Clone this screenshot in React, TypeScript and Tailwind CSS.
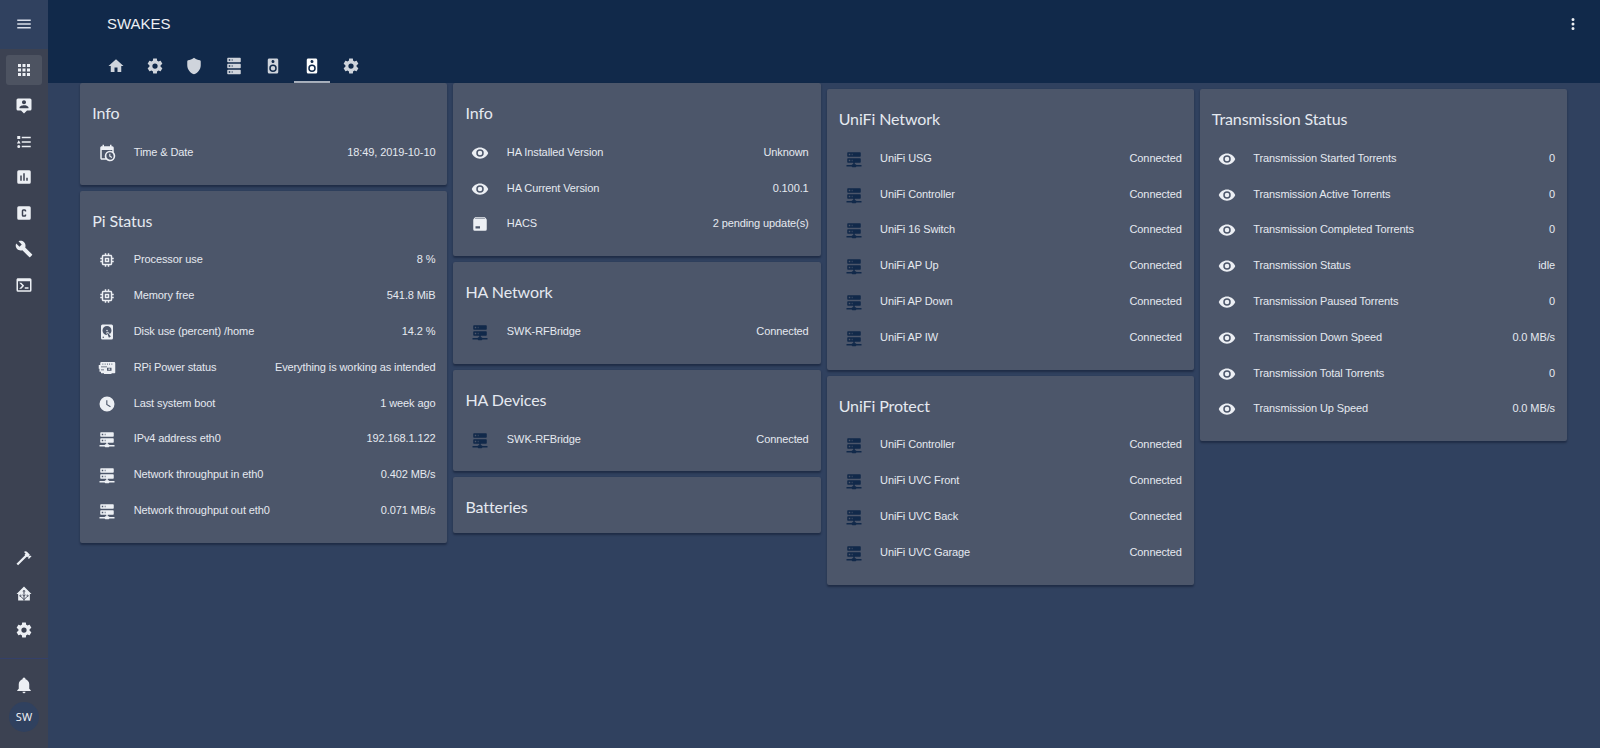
import React from "react";

const P = {
  menu: "M3,6H21V8H3V6M3,11H21V13H3V11M3,16H21V18H3V16Z",
  apps: "M16,20H20V16H16M16,14H20V10H16M10,8H14V4H10M16,8H20V4H16M10,14H14V10H10M4,14H8V10H4M4,20H8V16H4M10,20H14V16H10M4,8H8V4H4V8Z",
  home: "M10,20V14H14V20H19V12H22L12,3L2,12H5V20H10Z",
  cog: "M12,15.5A3.5,3.5 0 0,1 8.5,12A3.5,3.5 0 0,1 12,8.5A3.5,3.5 0 0,1 15.5,12A3.5,3.5 0 0,1 12,15.5M19.43,12.97C19.47,12.65 19.5,12.33 19.5,12C19.5,11.67 19.47,11.34 19.43,11L21.54,9.37C21.73,9.22 21.78,8.95 21.66,8.73L19.66,5.27C19.54,5.05 19.27,4.96 19.05,5.05L16.56,6.05C16.04,5.66 15.5,5.32 14.87,5.07L14.5,2.42C14.46,2.18 14.25,2 14,2H10C9.75,2 9.54,2.18 9.5,2.42L9.13,5.07C8.5,5.32 7.96,5.66 7.44,6.05L4.95,5.05C4.73,4.96 4.46,5.05 4.34,5.27L2.34,8.73C2.21,8.95 2.27,9.22 2.46,9.37L4.57,11C4.53,11.34 4.5,11.67 4.5,12C4.5,12.33 4.53,12.65 4.57,12.97L2.46,14.63C2.27,14.78 2.21,15.05 2.34,15.27L4.34,18.73C4.46,18.95 4.73,19.03 4.95,18.95L7.44,17.94C7.96,18.34 8.5,18.68 9.13,18.93L9.5,21.58C9.54,21.82 9.75,22 10,22H14C14.25,22 14.46,21.82 14.5,21.58L14.87,18.93C15.5,18.67 16.04,18.34 16.56,17.94L19.05,18.95C19.27,19.03 19.54,18.95 19.66,18.73L21.66,15.27C21.78,15.05 21.73,14.78 21.54,14.63L19.43,12.97Z",
  shield: "M12,1C9.5,3 6.5,4 4,4.3Q3,4.5 3,6V11C3,16.5 6.8,21.4 12,23C17.2,21.4 21,16.5 21,11V6Q21,4.5 20,4.3C17.5,4 14.5,3 12,1Z",
  server: "M4,1H20A1,1 0 0,1 21,2V6A1,1 0 0,1 20,7H4A1,1 0 0,1 3,6V2A1,1 0 0,1 4,1M4,9H20A1,1 0 0,1 21,10V14A1,1 0 0,1 20,15H4A1,1 0 0,1 3,14V10A1,1 0 0,1 4,9M4,17H20A1,1 0 0,1 21,18V22A1,1 0 0,1 20,23H4A1,1 0 0,1 3,22V18A1,1 0 0,1 4,17M9,5H10V3H9V5M9,13H10V11H9V13M9,21H10V19H9V21M5,3V5H7V3H5M5,11V13H7V11H5M5,19V21H7V19H5Z",
  speaker: "M12,12A3,3 0 0,0 9,15A3,3 0 0,0 12,18A3,3 0 0,0 15,15A3,3 0 0,0 12,12M12,20A5,5 0 0,1 7,15A5,5 0 0,1 12,10A5,5 0 0,1 17,15A5,5 0 0,1 12,20M12,4A2,2 0 0,1 14,6A2,2 0 0,1 12,8C10.89,8 10,7.1 10,6C10,4.89 10.89,4 12,4M17,2H7C5.89,2 5,2.89 5,4V20A2,2 0 0,0 7,22H17A2,2 0 0,0 19,20V4C19,2.89 18.1,2 17,2Z",
  net: "M13,19H14A1,1 0 0,1 15,20H22V22H15A1,1 0 0,1 14,23H10A1,1 0 0,1 9,22H2V20H9A1,1 0 0,1 10,19H11V17H4A1,1 0 0,1 3,16V12A1,1 0 0,1 4,11H20A1,1 0 0,1 21,12V16A1,1 0 0,1 20,17H13V19M4,3H20A1,1 0 0,1 21,4V8A1,1 0 0,1 20,9H4A1,1 0 0,1 3,8V4A1,1 0 0,1 4,3M9,7H10V5H9V7M9,15H10V13H9V15M5,5V7H7V5H5M5,13V15H7V13H5Z",
  eye: "M12,9A3,3 0 0,0 9,12A3,3 0 0,0 12,15A3,3 0 0,0 15,12A3,3 0 0,0 12,9M12,17A5,5 0 0,1 7,12A5,5 0 0,1 12,7A5,5 0 0,1 17,12A5,5 0 0,1 12,17M12,4.5C7,4.5 2.73,7.61 1,12C2.73,16.39 7,19.5 12,19.5C17,19.5 21.27,16.39 23,12C21.27,7.61 17,4.5 12,4.5Z",
  chip: "M15 9H9v6h6V9zm-2 4h-2v-2h2v2zm8-2V9h-2V7c0-1.1-.9-2-2-2h-2V3h-2v2h-2V3H9v2H7c-1.1 0-2 .9-2 2v2H3v2h2v2H3v2h2v2c0 1.1.9 2 2 2h2v2h2v-2h2v2h2v-2h2c1.1 0 2-.9 2-2v-2h2v-2h-2v-2h2zm-4 6H7V7h10v10z",
  clock: "M12,2A10,10 0 0,0 2,12A10,10 0 0,0 12,22A10,10 0 0,0 22,12A10,10 0 0,0 12,2M16.2,16.2L11,13V7H12.5V12.2L17,14.9L16.2,16.2Z",
  disk: "M6,2H18A2,2 0 0,1 20,4V20A2,2 0 0,1 18,22H6A2,2 0 0,1 4,20V4A2,2 0 0,1 6,2M12,4A6,6 0 0,0 6,10C6,13.31 8.69,16 12.1,16L11.22,13.77C10.95,13.29 11.11,12.68 11.59,12.4L12.45,11.9C12.93,11.63 13.54,11.79 13.82,12.27L15.74,14.69C17.12,13.59 18,11.9 18,10A6,6 0 0,0 12,4M12,9A1,1 0 0,1 13,10A1,1 0 0,1 12,11A1,1 0 0,1 11,10A1,1 0 0,1 12,9M7,18A1,1 0 0,0 6,19A1,1 0 0,0 7,20A1,1 0 0,0 8,19A1,1 0 0,0 7,18M12.09,13.27L14.58,19.58L17.17,18.08L12.95,12.77L12.09,13.27Z",
  person: "M20,2H4A2,2 0 0,0 2,4V16A2,2 0 0,0 4,18H8L12,22L16,18H20A2,2 0 0,0 22,16V4A2,2 0 0,0 20,2M12,4.3C13.5,4.3 14.7,5.5 14.7,7C14.7,8.5 13.5,9.7 12,9.7C10.5,9.7 9.3,8.5 9.3,7C9.3,5.5 10.5,4.3 12,4.3M18,15H6V14.1C6,12.1 10,11 12,11C14,11 18,12.1 18,14.1V15Z",
  list: "M5,9.5L7.5,14H2.5L5,9.5M3,4H7V8H3V4M5,20A2,2 0 0,0 7,18A2,2 0 0,0 5,16A2,2 0 0,0 3,18A2,2 0 0,0 5,20M9,5V7H21V5H9M9,19H21V17H9V19M9,13H21V11H9V13Z",
  poll: "M17,17H15V13H17M13,17H11V7H13M9,17H7V10H9M19,3H5A2,2 0 0,0 3,5V19A2,2 0 0,0 5,21H19A2,2 0 0,0 21,19V5A2,2 0 0,0 19,3Z",
  cbox: "M5,3H19A2,2 0 0,1 21,5V19A2,2 0 0,1 19,21H5A2,2 0 0,1 3,19V5A2,2 0 0,1 5,3M11,7A2,2 0 0,0 9,9V15A2,2 0 0,0 11,17H13A2,2 0 0,0 15,15V14H13V15H11V9H13V10H15V9A2,2 0 0,0 13,7H11Z",
  wrench: "M22.7,19L13.6,9.9C14.5,7.6 14,4.9 12.1,3C10.1,1 7.1,0.6 4.7,1.7L9,6L6,9L1.6,4.7C0.4,7.1 0.9,10.1 2.9,12.1C4.8,14 7.5,14.5 9.8,13.6L18.9,22.7C19.3,23.1 19.9,23.1 20.3,22.7L22.6,20.4C23.1,20 23.1,19.3 22.7,19Z",
  console: "M20,19V7H4V19H20M20,3A2,2 0 0,1 22,5V19A2,2 0 0,1 20,21H4A2,2 0 0,1 2,19V5C2,3.89 2.9,3 4,3H20M13,17V15H18V17H13M9.58,13L5.57,9H8.4L11.7,12.3C12.09,12.69 12.09,13.33 11.7,13.72L8.42,17H5.59L9.58,13Z",
  hammer: "M2,19.63L13.43,8.2L12.72,7.5L14.14,6.07L12,3.89C13.2,2.7 15.09,2.7 16.27,3.89L19.87,7.5L18.45,8.91H21.29L22,9.62L18.45,13.21L17.74,12.5V9.62L16.27,11.04L15.56,10.33L4.13,21.76L2,19.63Z",
  bell: "M21,19V20H3V19L5,17V11C5,7.9 7.03,5.17 10,4.29C10,4.19 10,4.1 10,4A2,2 0 0,1 12,2A2,2 0 0,1 14,4C14,4.1 14,4.19 14,4.29C16.97,5.17 19,7.9 19,11V17L21,19M14,21A2,2 0 0,1 12,23A2,2 0 0,1 10,21",
  cal: "M15,13H16.5V15.82L18.94,17.23L18.19,18.53L15,16.69V13M19,8H5V19H9.67C9.24,18.09 9,17.07 9,16A7,7 0 0,1 16,9C17.07,9 18.09,9.24 19,9.67V8M5,21C3.89,21 3,20.1 3,19V5C3,3.89 3.89,3 5,3H6V1H8V3H16V1H18V3H19A2,2 0 0,1 21,5V11.1C22.24,12.36 23,14.09 23,16A7,7 0 0,1 16,23C14.09,23 12.36,22.24 11.1,21H5M16,11.15A4.85,4.85 0 0,0 11.15,16C11.15,18.68 13.32,20.85 16,20.85A4.85,4.85 0 0,0 20.85,16C20.85,13.32 18.68,11.15 16,11.15Z",
  dots: "M12,16A2,2 0 0,1 14,18A2,2 0 0,1 12,20A2,2 0 0,1 10,18A2,2 0 0,1 12,16M12,10A2,2 0 0,1 14,12A2,2 0 0,1 12,14A2,2 0 0,1 10,12A2,2 0 0,1 12,10M12,4A2,2 0 0,1 14,6A2,2 0 0,1 12,8A2,2 0 0,1 10,6A2,2 0 0,1 12,4Z",
  box: "M5.12,5L5.6,4.4H18.3L18.87,5M20.54,5.23L19.15,3.55C18.88,3.21 18.47,3 18,3H6C5.53,3 5.12,3.21 4.84,3.55L3.46,5.23C3.17,5.57 3,6 3,6.5V19A2,2 0 0,0 5,21H19A2,2 0 0,0 21,19V6.5C21,6 20.83,5.57 20.54,5.23M6,18V15H12V18H6Z",
  board: "M4.5,4H21.5A1.5,1.5 0 0,1 23,5.5V18A1,1 0 0,1 22,19H18V20H8V19H4V17H2V13H1V8H3V5.5A1.5,1.5 0 0,1 4.5,4M6,6V7.5H7V6H6M9,6V7.5H10V6H9M12,6V7.5H13V6H12M15,6V7.5H16V6H15M18,6V7.5H19V6H18M4,10V11H12V10H4M12,11.5V15.5H18V11.5H12M13.8,12.8H16.2V14.2H13.8V12.8M4,14V15H8V14H4Z",
  hass: "M12,2L22,12H19.8V20.8H4.2V12H2L12,2Z",
};
type IconName = keyof typeof P;

const EVEN_ODD: IconName[] = ["box", "board"];

function Icon({ name, className = "" }: { name: IconName; className?: string }) {
  return (
    <svg viewBox="0 0 24 24" className={"size-[18px] shrink-0 " + className} fill="currentColor" fillRule={EVEN_ODD.includes(name) ? "evenodd" : "nonzero"}>
      <path d={P[name]} />
      {name === "hass" && (
        <g fill="none" stroke="#3c4252" strokeWidth="1.2">
          <path d="M12,9.5V21M12,19.5L7.8,15.3M12,19.5L16.2,15.3M12,15L9.8,12.8M12,15L14.2,12.8" />
          <circle cx="12" cy="8.3" r="1.1" />
          <circle cx="7.2" cy="14.4" r="0.9" />
          <circle cx="16.8" cy="14.4" r="0.9" />
        </g>
      )}
    </svg>
  );
}

type RowData = [IconName, string, string];

function Card({ title, rows, dark = false }: { title: string; rows: RowData[]; dark?: boolean }) {
  return (
    <section className="rounded-[2px] bg-[#4c566a] px-3 pt-[17px] pb-[13.5px] shadow-[0_1.5px_2px_rgba(10,20,40,0.45)]">
      <h2 className="h-[25.3px] font-[Lato,sans-serif] text-[16px] leading-[26px] text-[#e5e9f0]">{title}</h2>
      {rows.length > 0 && (
        <div className="pt-[8px] pb-[2px]">
          {rows.map(([icon, name, value], i) => (
            <div key={i} className="flex h-[35.82px] items-center pl-[6px]">
              <Icon name={icon} className={dark ? "mt-[3px] text-[#11294a]" : "mt-[3px] text-[#eceff4]"} />
              <span className="ml-[17.4px] flex-1 pt-px">{name}</span>
              <span className="pt-px">{value}</span>
            </div>
          ))}
        </div>
      )}
    </section>
  );
}

const unifi = (names: string[]): RowData[] => names.map((n) => ["net", n, "Connected"]);

const top: IconName[] = ["apps", "person", "list", "poll", "cbox", "wrench", "console"];
const bottom: IconName[] = ["hammer", "hass", "cog"];
const tabs: IconName[] = ["home", "cog", "shield", "server", "speaker", "speaker", "cog"];

export default function App() {
  return (
    <div className="flex h-[748px] w-[1600px] overflow-hidden bg-[#30415f] font-['Liberation_Sans',Arial,sans-serif] text-[11px] leading-4 tracking-[-0.1px] text-[#e5e9f0]">
      <aside className="flex w-[48px] shrink-0 flex-col bg-[#3c4252]">
        <div className="flex h-[49px] items-center justify-center bg-[#30415f] pb-[2px]">
          <Icon name="menu" className="text-[#d8dee9]" />
        </div>
        <nav className="flex flex-col items-center pt-[3px] text-[#eceff4]">
          {top.map((n, i) => (
            <div key={n} className="flex h-[35.82px] items-center">
              <div className={"flex h-[30px] w-[36px] items-center justify-center rounded-[3px] " + (i === 0 ? "bg-[#4d5361]" : "")}>
                <Icon name={n} />
              </div>
            </div>
          ))}
        </nav>
        <div className="mt-auto flex flex-col items-center pb-[10px] text-[#eceff4]">
          {bottom.map((n) => (
            <div key={n} className="flex h-[35.82px] items-center">
              <Icon name={n} />
            </div>
          ))}
        </div>
        <div className="flex h-[90px] flex-col items-center border-t border-[#34406a] pt-[17px] text-[#eceff4]">
          <Icon name="bell" />
          <div className="mt-[8px] flex size-[30px] items-center justify-center rounded-full bg-[#30415f] font-['Noto_Sans',sans-serif] tracking-normal">SW</div>
        </div>
      </aside>
      <div className="flex min-w-0 flex-1 flex-col">
        <header className="flex h-[83px] shrink-0 flex-col bg-[#11294a]">
          <div className="flex h-[48px] items-center justify-between pr-[18px] pl-[59px] text-[15px] tracking-normal text-[#eceff4]">
            <h1>SWAKES</h1>
            <Icon name="dots" />
          </div>
          <div className="flex h-[35px] pl-[50.3px] text-[#cfd4dc]">
            {tabs.map((n, i) => (
              <div key={i} className={"mr-[3.1px] flex w-[36px] items-center justify-center border-b-2 pt-[2px] " + (i === 5 ? "border-[#a9b1bd] text-white" : "border-transparent")}>
                <Icon name={n} />
              </div>
            ))}
          </div>
        </header>
        <main className="grid grid-cols-4 items-start gap-x-[6px] pr-[33px] pl-[32.3px]">
          <div className="flex flex-col gap-[6px]">
            <Card title="Info" rows={[["cal", "Time & Date", "18:49, 2019-10-10"]]} />
            <Card
              title="Pi Status"
              rows={[
                ["chip", "Processor use", "8 %"],
                ["chip", "Memory free", "541.8 MiB"],
                ["disk", "Disk use (percent) /home", "14.2 %"],
                ["board", "RPi Power status", "Everything is working as intended"],
                ["clock", "Last system boot", "1 week ago"],
                ["net", "IPv4 address eth0", "192.168.1.122"],
                ["net", "Network throughput in eth0", "0.402 MB/s"],
                ["net", "Network throughput out eth0", "0.071 MB/s"],
              ]}
            />
          </div>
          <div className="flex flex-col gap-[6px]">
            <Card
              title="Info"
              rows={[
                ["eye", "HA Installed Version", "Unknown"],
                ["eye", "HA Current Version", "0.100.1"],
                ["box", "HACS", "2 pending update(s)"],
              ]}
            />
            <Card title="HA Network" rows={unifi(["SWK-RFBridge"])} dark />
            <Card title="HA Devices" rows={unifi(["SWK-RFBridge"])} dark />
            <Card title="Batteries" rows={[]} />
          </div>
          <div className="flex flex-col gap-[6px] pt-[6px]">
            <Card title="UniFi Network" rows={unifi(["UniFi USG", "UniFi Controller", "UniFi 16 Switch", "UniFi AP Up", "UniFi AP Down", "UniFi AP IW"])} dark />
            <Card title="UniFi Protect" rows={unifi(["UniFi Controller", "UniFi UVC Front", "UniFi UVC Back", "UniFi UVC Garage"])} dark />
          </div>
          <div className="flex flex-col gap-[6px] pt-[6px]">
            <Card
              title="Transmission Status"
              rows={[
                ["eye", "Transmission Started Torrents", "0"],
                ["eye", "Transmission Active Torrents", "0"],
                ["eye", "Transmission Completed Torrents", "0"],
                ["eye", "Transmission Status", "idle"],
                ["eye", "Transmission Paused Torrents", "0"],
                ["eye", "Transmission Down Speed", "0.0 MB/s"],
                ["eye", "Transmission Total Torrents", "0"],
                ["eye", "Transmission Up Speed", "0.0 MB/s"],
              ]}
            />
          </div>
        </main>
      </div>
    </div>
  );
}
